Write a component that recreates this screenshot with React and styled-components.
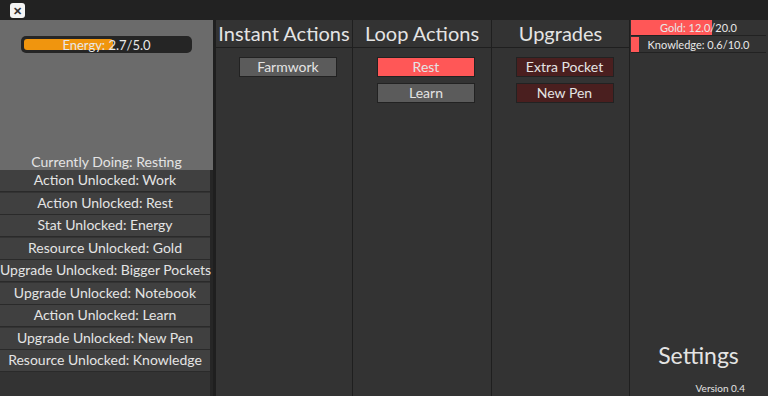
import styled, { createGlobalStyle } from "styled-components";

const Global = createGlobalStyle`
  html, body {
    margin: 0;
    padding: 0;
    background: #2f2f2f;
    font-family: Lato, "Open Sans", sans-serif;
    overflow: hidden;
  }
`;

const Page = styled.div`
  width: 768px;
  height: 396px;
  display: flex;
  flex-direction: column;
  color: #e4e4e4;
`;

const TopBar = styled.div`
  height: 20px;
  background: #222;
  display: flex;
  align-items: center;
  padding-left: 10px;
`;

const CloseButton = styled.div`
  width: 15px;
  height: 15px;
  border-radius: 3px;
  background: #f4f4f4;
  color: #333;
  font-size: 11px;
  font-weight: bold;
  line-height: 15px;
  text-align: center;
`;

const Main = styled.div`
  flex: 1;
  display: flex;
  min-height: 0;
`;

const LeftPanel = styled.div`
  width: 213px;
  background: #333;
  border-right: 3px solid #1f1f1f;
  display: flex;
  flex-direction: column;
`;

const StatusArea = styled.div`
  height: 150px;
  background: #6b6b6b;
  display: flex;
  flex-direction: column;
  align-items: center;
  justify-content: space-between;
  padding-top: 16px;
  box-sizing: border-box;
`;

const EnergyBar = styled.div`
  position: relative;
  width: 171px;
  height: 17px;
  border-radius: 5px;
  background: #252525;
  padding: 3px;
  box-sizing: border-box;
`;

const EnergyFill = styled.div`
  height: 100%;
  border-radius: 3px;
  background: #f0950e;
`;

const BarLabel = styled.span`
  position: absolute;
  inset: 0;
  display: flex;
  align-items: center;
  justify-content: center;
  font-size: ${(p) => p.size || 13}px;
  color: #e8e8e8;
`;

const StatusText = styled.div`
  font-size: 14px;
  line-height: 17px;
`;

const LogList = styled.div`
  flex: 1;
  display: flex;
  flex-direction: column;
  border-right: 3px solid #262626;
`;

const LogItem = styled.div`
  height: 21px;
  margin-bottom: 0.5px;
  background: #404040;
  border-bottom: 1px solid #2a2a2a;
  font-size: 14px;
  line-height: 20px;
  text-align: center;
  white-space: nowrap;
`;

const Column = styled.div`
  width: ${(p) => p.w}px;
  border-right: 1px solid #1f1f1f;
  display: flex;
  flex-direction: column;
  align-items: center;
  background: #333;
`;

const ColumnHeader = styled.div`
  width: 100%;
  height: 27px;
  border-bottom: 1px solid #1f1f1f;
  font-size: 20px;
  line-height: 27px;
  text-align: center;
  white-space: nowrap;
`;

const ButtonStack = styled.div`
  display: flex;
  flex-direction: column;
  gap: 6px;
  padding-top: 9px;
  margin-left: 8px;
`;

const colors = {
  gray: "#5b5b5b",
  red: "#ff5757",
  dark: "#4a1f1f",
};

const ActionButton = styled.div`
  width: 96px;
  height: 18px;
  background: ${(p) => colors[p.tone]};
  border: 1px solid #222;
  font-size: 14px;
  line-height: 18px;
  text-align: center;
`;

const ResourceColumn = styled.div`
  flex: 1;
  background: #333;
  display: flex;
  flex-direction: column;
  padding: 0 2px 2px 1px;
`;

const ResourceBar = styled.div`
  position: relative;
  height: 15px;
  margin-bottom: 1px;
  background: #333;
  border-bottom: 1px solid #222;
`;

const ResourceFill = styled.div`
  height: 100%;
  background: #ff5757;
`;

const Spacer = styled.div`
  flex: 1;
`;

const Settings = styled.div`
  font-size: 23px;
  text-align: center;
  margin-bottom: 13px;
`;

const Version = styled.div`
  font-size: 10px;
  text-align: right;
  padding-right: 21px;
`;

const log = [
  "Action Unlocked: Work",
  "Action Unlocked: Rest",
  "Stat Unlocked: Energy",
  "Resource Unlocked: Gold",
  "Upgrade Unlocked: Bigger Pockets",
  "Upgrade Unlocked: Notebook",
  "Action Unlocked: Learn",
  "Upgrade Unlocked: New Pen",
  "Resource Unlocked: Knowledge",
];

const resources = [
  { name: "Gold", value: 12.0, max: 20.0 },
  { name: "Knowledge", value: 0.6, max: 10.0 },
];

export default function App() {
  return (
    <Page>
      <Global />
      <TopBar>
        <CloseButton>✕</CloseButton>
      </TopBar>
      <Main>
        <LeftPanel>
          <StatusArea>
            <EnergyBar>
              <EnergyFill style={{ width: `${(2.7 / 5) * 100}%` }} />
              <BarLabel>Energy: 2.7/5.0</BarLabel>
            </EnergyBar>
            <StatusText>Currently Doing: Resting</StatusText>
          </StatusArea>
          <LogList>
            {log.map((l) => (
              <LogItem key={l}>{l}</LogItem>
            ))}
          </LogList>
        </LeftPanel>
        <Column w={136}>
          <ColumnHeader>Instant Actions</ColumnHeader>
          <ButtonStack>
            <ActionButton tone="gray">Farmwork</ActionButton>
          </ButtonStack>
        </Column>
        <Column w={138}>
          <ColumnHeader>Loop Actions</ColumnHeader>
          <ButtonStack>
            <ActionButton tone="red">Rest</ActionButton>
            <ActionButton tone="gray">Learn</ActionButton>
          </ButtonStack>
        </Column>
        <Column w={137}>
          <ColumnHeader>Upgrades</ColumnHeader>
          <ButtonStack>
            <ActionButton tone="dark">Extra Pocket</ActionButton>
            <ActionButton tone="dark">New Pen</ActionButton>
          </ButtonStack>
        </Column>
        <ResourceColumn>
          {resources.map((r) => (
            <ResourceBar key={r.name}>
              <ResourceFill style={{ width: `${(r.value / r.max) * 100}%` }} />
              <BarLabel size={11}>
                {r.name}: {r.value.toFixed(1)}/{r.max.toFixed(1)}
              </BarLabel>
            </ResourceBar>
          ))}
          <Spacer />
          <Settings>Settings</Settings>
          <Version>Version 0.4</Version>
        </ResourceColumn>
      </Main>
    </Page>
  );
}
